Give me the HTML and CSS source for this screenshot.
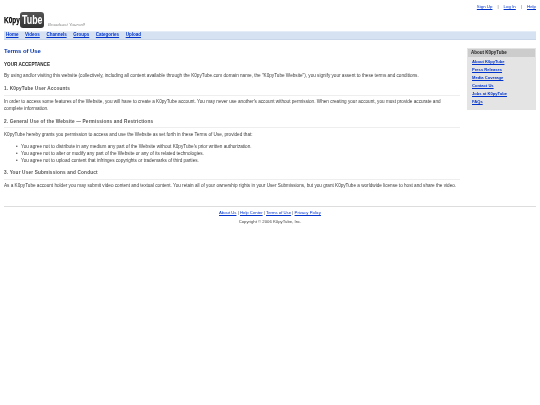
FILE: index.html
```html
<!DOCTYPE html>
<html lang="en">
<head>
<meta charset="utf-8">
<title>KOpyTube - Terms of Use</title>
<link rel="stylesheet" href="styles.css">
</head>
<body>
<div class="page">
  <div class="util">
    <a href="#">Sign Up</a><span class="sep">|</span><a href="#">Log In</a><span class="sep">|</span><a href="#">Help</a>
  </div>
  <div class="brand">
    <div class="logo"><span class="k"><span class="squeeze">K0py</span></span><span class="tube"><span class="squeeze">Tube</span></span></div>
    <span class="tag">Broadcast Yourself</span>
  </div>
  <nav class="nav">
    <a href="#">Home</a><a href="#">Videos</a><a href="#">Channels</a><a href="#">Groups</a><a href="#">Categories</a><a href="#">Upload</a>
  </nav>
  <div class="columns">
    <main class="main">
      <h1>Terms of Use</h1>
      <h2 class="caps">YOUR ACCEPTANCE</h2>
      <p>By using and/or visiting this website (collectively, including all content available through the K0pyTube.com domain name, the "K0pyTube Website"), you signify your assent to these terms and conditions.</p>
      <h3>1. K0pyTube User Accounts</h3>
      <p>In order to access some features of the Website, you will have to create a K0pyTube account. You may never use another's account without permission. When creating your account, you must provide accurate and complete information.</p>
      <h3>2. General Use of the Website — Permissions and Restrictions</h3>
      <p>K0pyTube hereby grants you permission to access and use the Website as set forth in these Terms of Use, provided that:</p>
      <ul>
        <li>You agree not to distribute in any medium any part of the Website without K0pyTube's prior written authorization.</li>
        <li>You agree not to alter or modify any part of the Website or any of its related technologies.</li>
        <li>You agree not to upload content that infringes copyrights or trademarks of third parties.</li>
      </ul>
      <h3>3. Your User Submissions and Conduct</h3>
      <p>As a K0pyTube account holder you may submit video content and textual content. You retain all of your ownership rights in your User Submissions, but you grant K0pyTube a worldwide license to host and share the video.</p>
    </main>
    <aside class="side">
      <h4>About K0pyTube</h4>
      <a href="#">About K0pyTube</a>
      <a href="#">Press Releases</a>
      <a href="#">Media Coverage</a>
      <a href="#">Contact Us</a>
      <a href="#">Jobs at K0pyTube</a>
      <a href="#">FAQs</a>
    </aside>
  </div>
  <footer class="foot">
    <div class="foot-links"><a href="#">About Us</a> | <a href="#">Help Center</a> | <a href="#">Terms of Use</a> | <a href="#">Privacy Policy</a></div>
    <div class="copy">Copyright © 2006 K0pyTube, Inc.</div>
  </footer>
</div>
</body>
</html>
```
FILE: styles.css
```css
* { box-sizing: border-box; }
html, body { margin: 0; padding: 0; background: #fff; }
body { font-family: "Liberation Sans", Arial, sans-serif; font-size: 4.65px; line-height: 6.5px; color: #3a3a3a; }
a { color: #03c; }
.page { padding: 4px 4px 0; filter: blur(0.3px); }
.util { display: flex; justify-content: flex-end; height: 7px; font-size: 4.4px; line-height: 6px; }
.util .sep { margin: 0 5px; color: #666; }
.brand { display: flex; align-items: flex-end; height: 20px; }
.logo { display: flex; align-items: center; height: 16.5px; margin-bottom: 3px; }
.squeeze { display: inline-block; transform-origin: 0 50%; }
.k { width: 16px; font-size: 9.5px; font-weight: 700; color: #000; -webkit-text-stroke: .25px #000; }
.k .squeeze { transform: scaleX(.68); }
.tube { display: block; width: 24px; height: 16.5px; padding-left: 1.5px; line-height: 16px; font-size: 13px; font-weight: 700; color: #fff; background: linear-gradient(#555, #333); border-radius: 3px; white-space: nowrap; }
.tube .squeeze { transform: scaleX(.68); }
.tag { margin: 0 0 3px 4px; font-size: 4.4px; font-style: italic; color: #888; line-height: 6px; }
.nav { display: flex; gap: 6.6px; height: 9px; padding: 0 2px; align-items: center; background: #d6e2f2; border-top: 1px solid #e4ecf7; border-bottom: 1px solid #c9d6ea; font-size: 4.5px; font-weight: 700; }
.columns { display: flex; justify-content: space-between; align-items: flex-start; margin-top: 8px; }
.main { width: 456px; }
h1 { margin: 0; font-size: 5.9px; line-height: 7px; font-weight: 700; color: #03a; }
.caps { margin: 7px 0 0; font-size: 4.6px; line-height: 6px; font-weight: 700; color: #222; }
p { margin: 5px 0 0; }
h3 { margin: 6.5px 0 0; padding-bottom: 2px; font-size: 4.7px; letter-spacing: .17px; line-height: 6.5px; font-weight: 700; color: #555; border-bottom: 1px solid #eee; }
h3 + p { margin-top: 3.5px; }
ul { margin: 4.5px 0 0; padding: 0 0 0 12px; list-style: none; }
li { display: flex; gap: 3px; line-height: 7px; }
li::before { content: "•"; width: 2px; }
.side { width: 69px; height: 62px; padding: 1px 1px 0; background: #e4e4e4; display: flex; flex-direction: column; font-size: 4.1px; font-weight: 700; }
.side h4 { margin: 0 0 1px; height: 8px; padding: 0 3px; line-height: 8px; font-size: 4.5px; color: #222; background: #ccc; }
.side a { height: 8px; line-height: 8px; padding: 0 4px; }
.foot { margin-top: 16px; border-top: 1px solid #ddd; padding-top: 3px; text-align: center; font-size: 4.25px; color: #444; }
.copy { margin-top: 3px; }
```
